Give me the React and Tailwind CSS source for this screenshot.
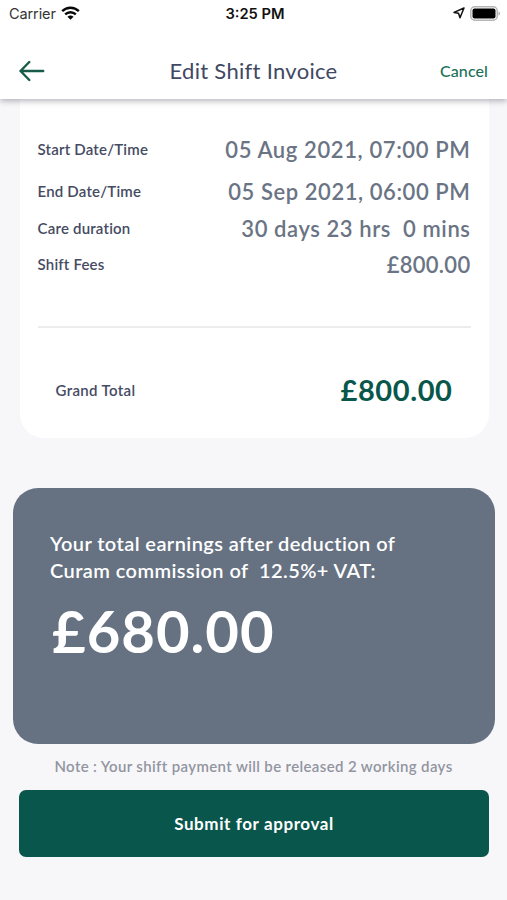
import React from 'react';

const shiftDetails = [
  { label: 'Start Date/Time', value: '05 Aug 2021, 07:00 PM', row: 'h-[42px]', spacing: 'tracking-[0.62px]' },
  { label: 'End Date/Time', value: '05 Sep 2021, 06:00 PM', row: 'h-[43px]', spacing: 'tracking-[0.57px]' },
  { label: 'Care duration', value: '30 days 23 hrs  0 mins', row: 'h-[30px]', spacing: 'tracking-[0.58px]' },
  { label: 'Shift Fees', value: '£800.00', row: 'h-[42px]', spacing: 'tracking-[0.3px]' }
];

const WifiIcon = () => (
  <svg width="19" height="15" viewBox="0 0 20 15" fill="none" stroke="#080808" strokeWidth="2.5">
    <path d="M1.2 5.1C6.2 .2 13.8 .2 18.8 5.1" />
    <path d="M4.4 8.5C7.6 5.4 12.4 5.4 15.6 8.5" />
    <path d="M6.8 10.9C8.6 9.2 11.4 9.2 13.2 10.9L10 14.2Z" fill="#080808" stroke="none" />
  </svg>
);

const LocationIcon = () => (
  <svg width="12" height="12" viewBox="0 0 12 12" fill="none" stroke="#111" strokeWidth="1.5" strokeLinejoin="round">
    <path d="M11 1L1 5.4L5.5 6.2L7 10.7Z" />
  </svg>
);

const BatteryIcon = () => (
  <svg width="31" height="15" viewBox="0 0 31 15">
    <rect x="0.8" y="0.8" width="26.4" height="13.4" rx="4" fill="#fff" stroke="#b5b5b5" strokeWidth="1.5" />
    <rect x="2.5" y="2.5" width="23" height="10" rx="2" fill="#000" />
    <path d="M28.5 5.2Q31.5 7.5 28.5 9.8Z" fill="#aaa" />
  </svg>
);

const StatusBar = () => (
  <div className="grid h-[26px] grid-cols-3 items-center pl-[9px] pr-[6px] font-['Inter','Liberation_Sans',sans-serif] text-[14.5px] text-[#111]">
    <div className="flex items-center gap-[5px]">
      <span className="pt-[2px] tracking-[-0.1px] text-[#333]">Carrier</span>
      <WifiIcon />
    </div>
    <span className="pt-[2px] text-center text-[14.7px] font-semibold">3:25 PM</span>
    <div className="flex items-center justify-end gap-[5px]">
      <LocationIcon />
      <BatteryIcon />
    </div>
  </div>
);

const Header = () => (
  <header className="relative z-10 h-[99px] bg-white shadow-[0_2px_6px_rgba(40,40,60,0.35)]">
    <StatusBar />
    <div className="grid h-[90px] grid-cols-[80px_1fr_80px] items-center pl-[19px] pr-[19px]">
      <button type="button" aria-label="Back">
        <svg width="26" height="22" viewBox="0 0 26 22" fill="none" stroke="#165c49" strokeWidth="2.4" strokeLinecap="round" strokeLinejoin="round">
          <path d="M24.2 11H1.5M10.3 2L1.5 11L10.3 20" />
        </svg>
      </button>
      <h1 className="pb-[2px] text-center text-[22px] tracking-[0.3px] text-[#414863]">Edit Shift Invoice</h1>
      <button type="button" className="pb-px text-right text-[16px] font-medium tracking-[0.1px] text-[#1c7058]">Cancel</button>
    </div>
  </header>
);

const App = () => {
  return (
    <div className="h-[900px] w-[507px] overflow-hidden bg-[#f7f7fa] font-['Lato','Liberation_Sans',sans-serif]">
      <Header />

      {/* Invoice breakdown */}
      <section className="ml-[20px] mr-[18.5px] h-[339px] rounded-b-[24px] bg-white pl-[17.5px] pr-[18px] pt-[29px]">
        {shiftDetails.map((item) => (
          <div key={item.label} className={`flex items-center justify-between ${item.row}`}>
            <span className="text-[15px] font-semibold tracking-[0.2px] text-[#454b62]">{item.label}</span>
            <span className={`whitespace-pre text-[22px] font-semibold text-[#6a7484] ${item.spacing}`}>{item.value}</span>
          </div>
        ))}
        <div className="mt-[41px] border-t-2 border-[#ebecee]" />
        <div className="flex h-[124px] items-center justify-between px-[18px]">
          <span className="text-[15px] font-semibold tracking-[0.35px] text-[#454b62]">Grand Total</span>
          <span className="text-[29px] font-bold tracking-[0.6px] text-[#09574b]">£800.00</span>
        </div>
      </section>

      {/* Earnings after commission */}
      <section className="ml-[13px] mr-[12.5px] mt-[50px] h-[256px] rounded-[25px] bg-[#667282] px-[37px] pt-[42px] text-white">
        <p className="whitespace-pre text-[20px] font-semibold leading-[26.5px] tracking-[0.42px]">
          {'Your total earnings after deduction of\nCuram commission of  12.5%+ VAT:'}
        </p>
        <p className="ml-[2px] mt-[13px] text-[58px] font-bold leading-[70px] tracking-[1px]">£680.00</p>
      </section>

      <p className="mt-[10px] h-[24px] text-center text-[15px] font-semibold leading-[24px] tracking-[0.36px] text-[#9295a0]">
        Note : Your shift payment will be released 2 working days
      </p>
      <button
        type="button"
        className="mx-[19px] mt-[12px] block h-[67px] w-[470px] rounded-[7px] bg-[#09564c] text-[17px] font-bold tracking-[0.6px] text-white"
      >
        Submit for approval
      </button>
    </div>
  );
};

export default App;
